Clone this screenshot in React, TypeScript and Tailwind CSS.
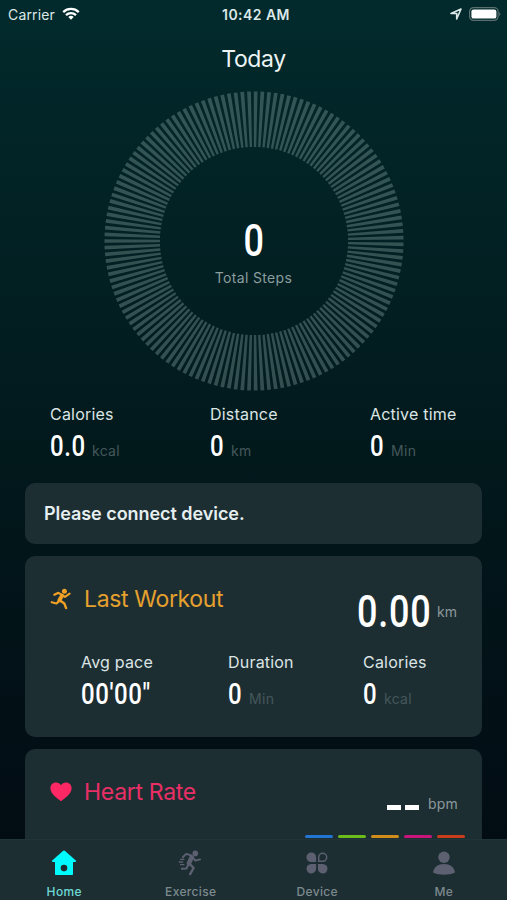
import type { ReactNode } from "react";
import clsx from "clsx";

const TICKS = 139;

const zones = ["bg-[#2375d3]", "bg-[#6cbc1c]", "bg-[#d18d1c]", "bg-[#c9147c]", "bg-[#c83e1b]"];

const StatusBar = () => (
  <header className="flex h-7 items-center px-2 text-[14px] text-[#dce8e8]">
    <div className="flex flex-1 items-center gap-[7px]">
      <span className="tracking-[0.15px]">Carrier</span>
      <svg width="18" height="13" viewBox="0 0 18 13" fill="none" stroke="#fff" strokeWidth="2.3" className="-mt-[2px]">
        <path d="M1.2 5.1a11.2 11.2 0 0 1 15.6 0" />
        <path d="M4 8.1a7.1 7.1 0 0 1 10 0" />
        <path d="M9 12.7 6.3 10a3.9 3.9 0 0 1 5.4 0z" fill="#fff" stroke="none" />
      </svg>
    </div>
    <span className="-mr-[5px] text-[14px] font-semibold tracking-[0.45px]">10:42 AM</span>
    <div className="flex flex-1 items-center justify-end gap-[7px]">
      <svg width="12" height="12" viewBox="0 0 12 12" fill="none" stroke="#dce8e8" strokeWidth="1.6" strokeLinejoin="round" className="-mt-[1px]">
        <path d="M1 5.5 11 1 6.7 11V5.5z" />
      </svg>
      <svg width="32" height="14" viewBox="0 0 32 14" className="-mr-[2px] -mt-[1px]">
        <rect x="0.6" y="0.6" width="28.5" height="12.8" rx="4" fill="none" stroke="#59706f" strokeWidth="1.2" />
        <rect x="2.4" y="2.4" width="25" height="9.2" rx="2.2" fill="#fff" />
        <path d="M30.2 5v4q1.2-.6 1.2-2t-1.2-2z" fill="#59706f" />
      </svg>
    </div>
  </header>
);

// Narrow digits, squeezed horizontally around their left edge
const Digits = ({ children, className }: { children: ReactNode; className?: string }) => (
  <span
    className={clsx(
      "inline-block whitespace-nowrap font-['Roboto',sans-serif] font-medium text-white",
      className
    )}
  >
    {children}
  </span>
);

interface StatProps {
  label: string;
  value: string;
  unit?: string;
  width: string;
}

const Stat = ({ label, value, unit, width }: StatProps) => (
  <div>
    <p className="text-[16px] leading-5 tracking-[0.2px] text-[#dce5e5]">{label}</p>
    <div className="mt-[7px] flex h-[30px] items-baseline">
      <span className={width}>
        <Digits className="origin-left scale-x-[0.8] text-[30px] leading-[30px] tracking-[0.7px]">{value}</Digits>
      </span>
      {unit && <span className="text-[14px] tracking-[0.3px] text-[#43575a]">{unit}</span>}
    </div>
  </div>
);

const StepsRing = () => (
  <section className="relative mx-auto mt-[17px] h-[300px] w-[300px] shrink-0">
    <svg width="300" height="300" viewBox="0 0 300 300">
      <circle
        cx="150"
        cy="150"
        r="121.8"
        fill="none"
        stroke="#91b0ad"
        strokeOpacity="0.35"
        strokeWidth="55.5"
        pathLength={TICKS * 10}
        strokeDasharray="5.6 4.4"
        strokeDashoffset="2.8"
        transform="rotate(180 150 150)"
      />
    </svg>
    <div className="absolute inset-0 flex flex-col items-center pt-[127px]">
      <Digits className="origin-center scale-x-[0.8] text-[45px] leading-[46px]">0</Digits>
      <p className="mt-[4px] text-[14px] leading-5 tracking-[0.35px] text-[#8b9d9e]">Total Steps</p>
    </div>
  </section>
);

const RunnerIcon = () => (
  <svg width="22" height="22" viewBox="0 0 22 22" fill="none" stroke="#f0a125" strokeWidth="2.4" strokeLinecap="round" strokeLinejoin="round">
    <circle cx="14.4" cy="3.2" r="2.5" fill="#f0a125" stroke="none" />
    <path d="M4.3 6.8 8.4 4.8l4.1 2.4 2.5 1.7 4.6-3.2" strokeWidth="2.1" />
    <path d="M12 7.8 9.4 12.2" strokeWidth="4" />
    <path d="M9.3 12.9 6.5 15.5 1.7 14.2" strokeWidth="2.2" />
    <path d="M10 12.4l4.3 3 1.8 4.7" strokeWidth="2.4" />
  </svg>
);

const HeartIcon = () => (
  <svg width="22" height="20" viewBox="0 0 22 20" fill="#ff2864">
    <path d="M11 19.2C7.2 16.6.4 11.6.4 6.3.4 2.9 2.8.6 5.9.6 8 .6 9.9 1.6 11 3.2 12.1 1.6 14 .6 16.1.6c3.1 0 5.5 2.3 5.5 5.7 0 5.3-6.8 10.3-10.6 12.9z" />
  </svg>
);

const HomeIcon = () => (
  <svg width="26" height="26" viewBox="0 0 26 26" fill="#00fbff">
    <path fillRule="evenodd" d="M12.2.8q.8-.7 1.6 0l11 9.8q1 1.2-.5 1.5H22v12.1q0 .8-.8.8H4.8q-.8 0-.8-.8V12.1H1.7q-1.5-.3-.5-1.5zM13 14.8a3.3 3.3 0 1 0 0 6.6 3.3 3.3 0 0 0 0-6.6z" />
  </svg>
);

const ExerciseIcon = () => (
  <svg width="26" height="26" viewBox="0 0 26 26" fill="none" stroke="#5c6070" strokeLinecap="round" strokeLinejoin="round">
    <circle cx="17.3" cy="3.4" r="2.8" fill="#5c6070" stroke="none" />
    <path d="M4.8 7.2 8.2 3.9l5.3 1.6 3.8 5.1 4.8-1.2" strokeWidth="1.9" />
    <path d="m13.6 7.4-2.7 6" strokeWidth="4.6" />
    <path d="m11.8 14.2 3.8 3.8-3.5 6.1" strokeWidth="2.4" />
    <path d="m10.1 15-1.7 3.5-4.6.2" strokeWidth="2" />
    <path d="M2.5 9.3h5M1.3 12h5.2M2.5 14.7h3.8" strokeWidth="1.3" strokeDasharray="3.4 1.8" />
  </svg>
);

const DeviceIcon = () => (
  <svg width="22" height="22" viewBox="0 0 22 22" fill="#5c6070">
    <path d="M5.2.5a4.8 4.8 0 0 1 4.9 4.8v4.8H5.2a4.8 4.8 0 0 1 0-9.6z" />
    <path d="M5.2 11.9h4.9v4.8a4.8 4.8 0 1 1-4.9-4.8z" />
    <path d="M11.9 11.9h4.9a4.8 4.8 0 1 1-4.9 4.8z" />
    <path d="M16.7 1.3a4 4 0 1 1 0 8h-4V5.3a4 4 0 0 1 4-4z" fill="none" stroke="#5c6070" strokeWidth="1.5" />
  </svg>
);

const MeIcon = () => (
  <svg width="24" height="24" viewBox="0 0 24 24" fill="#5c6070">
    <circle cx="12" cy="6.2" r="5.7" />
    <path d="M1 21.6C1.6 16 6 12.9 12 12.9S22.4 16 23 21.6C20 23.2 16 23.7 12 23.7S4 23.2 1 21.6z" />
  </svg>
);

const tabs = [
  { label: "Home", icon: <HomeIcon />, active: true },
  { label: "Exercise", icon: <ExerciseIcon /> },
  { label: "Device", icon: <DeviceIcon /> },
  { label: "Me", icon: <MeIcon /> },
];

const TabBar = () => (
  <nav className="grid h-[61px] shrink-0 grid-cols-4 border-t border-[#213438] bg-[#1d2e33] pl-px">
    {tabs.map((tab) => (
      <div key={tab.label} className="flex flex-col items-center pt-[10px]">
        <div className="flex h-[26px] items-center">{tab.icon}</div>
        <span
          className={clsx(
            "mt-[8px] text-[12px] font-medium leading-4 tracking-[0.35px]",
            tab.active ? "text-[#6fd9d5]" : "text-[#7c898d]"
          )}
        >
          {tab.label}
        </span>
      </div>
    ))}
  </nav>
);

export default function App() {
  return (
    <div className="flex h-[900px] w-[507px] flex-col overflow-hidden bg-linear-to-b from-[#022a2c] via-[#02191c] to-[#020a12] font-['Inter',sans-serif]">
      <StatusBar />
      <h1 className="mt-4 text-center text-[23px] leading-[30px] tracking-[-0.4px] text-[#edf4f4]">Today</h1>
      <main className="flex min-h-0 flex-1 flex-col overflow-hidden">
        <StepsRing />
        <section className="ml-[50px] mt-[13px] grid shrink-0 grid-cols-[160px_160px_1fr]">
          <Stat label="Calories" value="0.0" unit="kcal" width="w-[42px]" />
          <Stat label="Distance" value="0" unit="km" width="w-[21px]" />
          <Stat label="Active time" value="0" unit="Min" width="w-[21px]" />
        </section>

        <section className="mx-[25px] mt-[21.5px] flex h-[61px] shrink-0 items-center rounded-[10px] bg-[#1d2e33] px-[19px]">
          <p className="text-[18px] font-semibold tracking-[-0.05px] text-[#e6efef]">Please connect device.</p>
        </section>

        <section className="mx-[25px] mt-3 h-[181px] shrink-0 rounded-[10px] bg-[#1d2e33] px-[25px] pt-[27.5px]">
          <div className="flex h-[69px] justify-between">
            <div className="flex h-8 items-center gap-[12px] text-[23px] tracking-[-0.35px] text-[#e5a02d]">
              <RunnerIcon />
              <h2>Last Workout</h2>
            </div>
            <div className="mt-[6px] flex h-[46px] items-baseline">
              <span className="w-[80px]">
                <Digits className="origin-left scale-x-[0.8] text-[45px] leading-[46px] tracking-[1px]">0.00</Digits>
              </span>
              <span className="relative -top-[10px] text-[14px] text-[#8b989b]">km</span>
            </div>
          </div>
          <div className="ml-[31px] grid grid-cols-[147px_135px_1fr]">
            <Stat label="Avg pace" value={"00'00\""} width="w-[75px]" />
            <Stat label="Duration" value="0" unit="Min" width="w-[21px]" />
            <Stat label="Calories" value="0" unit="kcal" width="w-[21px]" />
          </div>
        </section>

        <section className="mx-[25px] mt-3 h-[181px] shrink-0 rounded-[10px] bg-[#1d2e33] px-[25px] pt-[27.5px]">
          <div className="flex h-[59px] justify-between">
            <div className="flex h-8 items-center gap-[12px] text-[23px] tracking-[-0.3px] text-[#e82f66]">
              <HeartIcon />
              <h2>Heart Rate</h2>
            </div>
            <div className="-mr-px mt-[16px] flex h-5 items-center">
              <span className="mr-1 mt-[11px] h-[5px] w-[14px] bg-white" />
              <span className="mr-[9px] mt-[11px] h-[5px] w-[14px] bg-white" />
              <span className="mt-[3px] text-[14px] tracking-[0.2px] text-[#8b989b]">bpm</span>
            </div>
          </div>
          <div className="-mr-[8px] flex justify-end gap-[5px]">
            {zones.map((zone) => (
              <span key={zone} className={clsx("h-[3px] w-7 rounded-full", zone)} />
            ))}
          </div>
        </section>
      </main>
      <TabBar />
    </div>
  );
}
